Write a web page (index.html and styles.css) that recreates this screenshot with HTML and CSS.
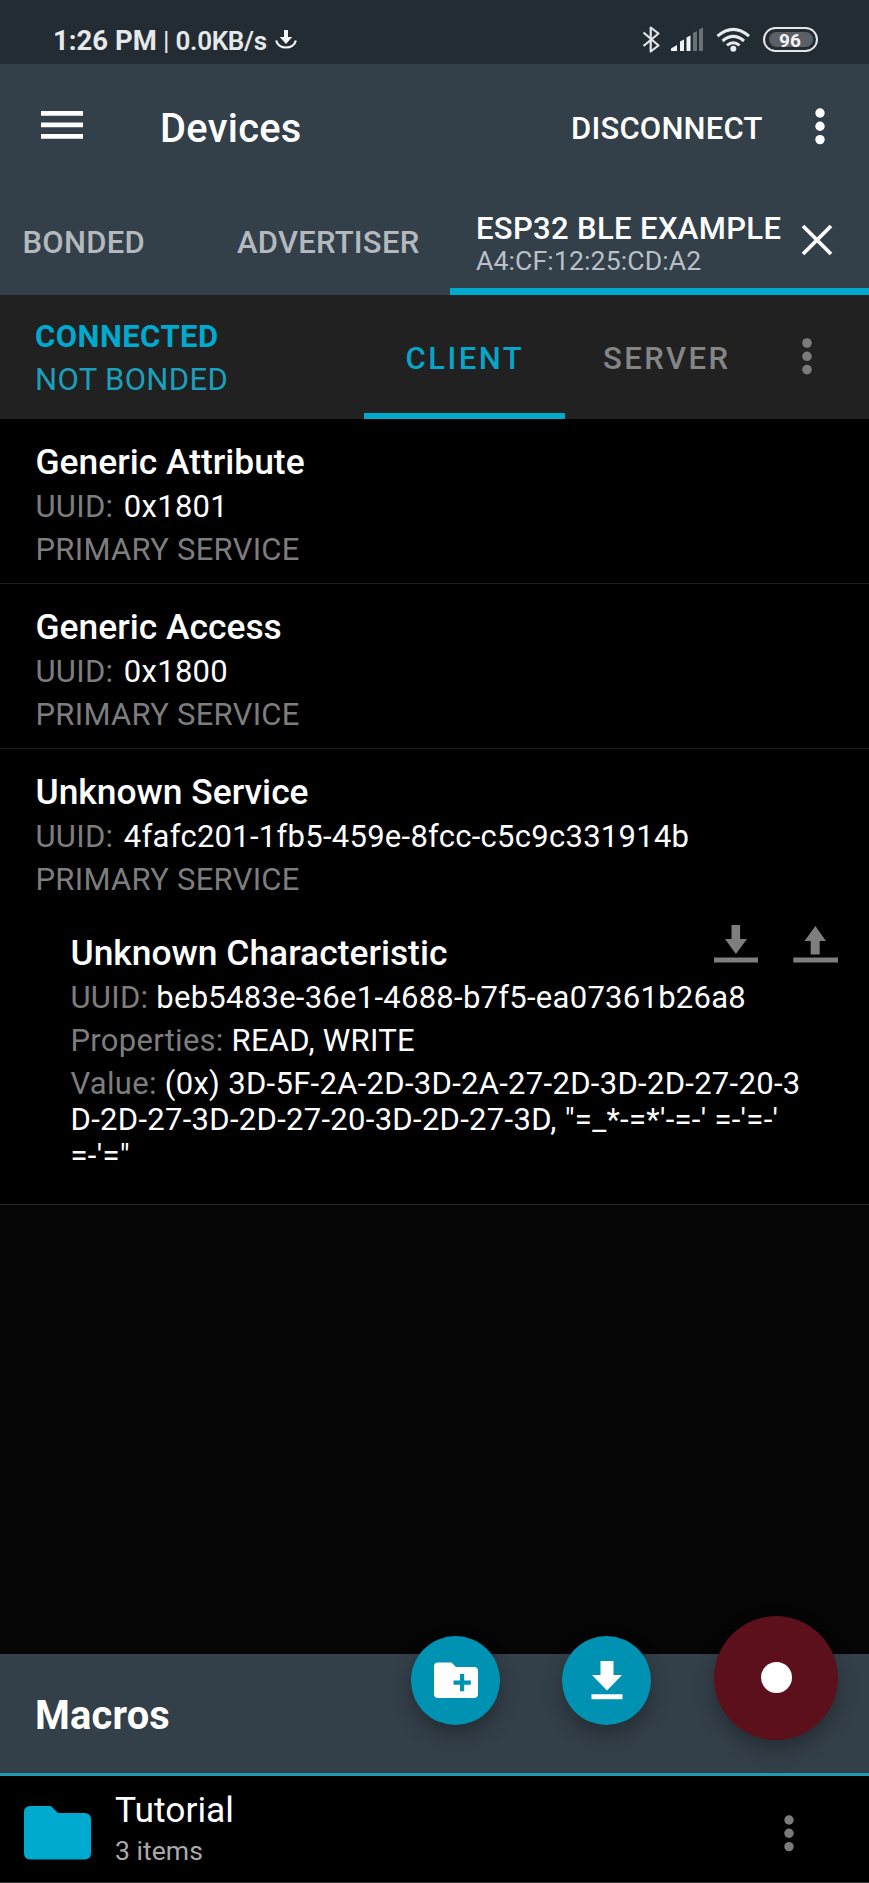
FILE: index.html
```html
<!DOCTYPE html>
<html lang="en">
<head>
<meta charset="utf-8">
<title>Devices</title>
<link rel="stylesheet" href="styles.css">
</head>
<body>
<div class="screen">
  <div class="status">
    <span class="time">1:26 PM</span><span class="sep">|</span><span class="rate">0.0KB/s</span>
    <svg class="status-dl" width="22" height="20" viewBox="0 0 22 20"><path d="M9 0h4v7h4.200L11 14 4.800 7H9z" fill="#f4f6f7"/><path d="M1.200 10.500C3 19.800 19 19.800 20.800 10.500" fill="none" stroke="#f4f6f7" stroke-width="2.200"/></svg>
    <svg class="status-icons" width="176" height="30" viewBox="642 24 176 30">
      <path d="M643.500 32.500 658.500 45.500 650.700 51.500V27.500L658.500 33.500 643.500 46" fill="none" stroke="#e4e7e9" stroke-width="2.200" stroke-linejoin="round"/>
      <path d="M671 51V48.500L677 45V51z" fill="#f1f3f4"/><path d="M680 51V41.500L684 39.500V51zM686.500 51V37.500L690.500 35.500V51z" fill="#f1f3f4"/>
      <path d="M693 51V33L697 31V51zM699 51V29.500L703 27.500V51z" fill="#6a7176"/>
      <g fill="none" stroke="#e8ebed" stroke-width="3"><path d="M717.500 36.200Q733.300 22.500 749 36.200M722.500 41Q733.300 31.800 744 41M727 45.400Q733.300 40 739.500 45.400"/></g><circle cx="733.300" cy="48.800" r="3" fill="#e8ebed"/>
      <rect x="764" y="28" width="53" height="23" rx="11.500" fill="none" stroke="#e4e7e9" stroke-width="2"/><rect x="769" y="32" width="44" height="15" rx="7.500" fill="#5a6065"/>
      <text class="battery" x="790" y="46.500" text-anchor="middle">96</text>
    </svg>
  </div>

  <header class="toolbar">
    <svg class="menu" width="42" height="28" viewBox="0 0 42 28"><path d="M0 0h42v4.700H0zM0 11.500h42v4.700H0zM0 23h42v4.700H0z" fill="#fff"/></svg>
    <h1 class="title">Devices</h1>
    <span class="disconnect">DISCONNECT</span>
    <svg class="dots-top" width="10" height="37" viewBox="0 0 10 37" fill="#fff"><circle cx="5" cy="5" r="4.700"/><circle cx="5" cy="18.300" r="4.700"/><circle cx="5" cy="31.600" r="4.700"/></svg>
  </header>

  <nav class="tabs">
    <div class="tab tab-bonded">BONDED</div>
    <div class="tab tab-adv">ADVERTISER</div>
    <div class="tab-active">
      <div class="device"><div class="device-name">ESP32 BLE EXAMPLE</div><div class="device-mac">A4:CF:12:25:CD:A2</div></div>
      <svg class="close" width="32" height="32" viewBox="0 0 32 32"><path d="M2 2l28 28M30 2L2 30" stroke="#fff" stroke-width="3.800" fill="none"/></svg>
    </div>
  </nav>

  <div class="connection">
    <div class="state"><div class="connected">CONNECTED</div><div class="bond">NOT BONDED</div></div>
    <div class="mode mode-active">CLIENT</div>
    <div class="mode mode-server">SERVER</div>
    <svg class="dots-mid" width="10" height="37" viewBox="0 0 10 37" fill="#7b7b7b"><circle cx="5" cy="5" r="4.800"/><circle cx="5" cy="18.300" r="4.800"/><circle cx="5" cy="31.600" r="4.800"/></svg>
  </div>

  <main class="services">
    <section class="service">
      <h2 class="name">Generic Attribute</h2>
      <div class="line"><span class="label wide">UUID:</span>0x1801</div>
      <div class="line label">PRIMARY SERVICE</div>
    </section>
    <section class="service">
      <h2 class="name">Generic Access</h2>
      <div class="line"><span class="label wide">UUID:</span>0x1800</div>
      <div class="line label">PRIMARY SERVICE</div>
    </section>
    <section class="service service-open">
      <h2 class="name">Unknown Service</h2>
      <div class="line"><span class="label wide">UUID:</span>4fafc201-1fb5-459e-8fcc-c5c9c331914b</div>
      <div class="line label">PRIMARY SERVICE</div>
      <div class="characteristic">
        <div class="char-head">
          <h3 class="name">Unknown Characteristic</h3>
          <svg class="rw" width="124" height="38" viewBox="0 0 124 38" fill="#7e7e7e"><path d="M17.500 0h8.600v14H33L21.900 29 11 14h6.500zM0 32.500h44v5H0z"/><path d="M101.400 1 112 16h-6.300v13.500h-9V16h-6.200zM79.300 32.500h45v5h-45z"/></svg>
        </div>
        <div class="line"><span class="label">UUID: </span>beb5483e-36e1-4688-b7f5-ea07361b26a8</div>
        <div class="line"><span class="label">Properties: </span>READ, WRITE</div>
        <div class="value"><span class="label">Value: </span>(0x) 3D-5F-2A-2D-3D-2A-27-2D-3D-2D-27-20-3<br>D-2D-27-3D-2D-27-20-3D-2D-27-3D, "=_*-=*'-=-' =-'=-'<br>=-'="</div>
      </div>
    </section>
  </main>

  <footer class="macros">
    <div class="macro-bar">
      <h2 class="macro-title">Macros</h2>
      <div class="fab fab-folder"><svg width="46" height="37" viewBox="0 0 46 37"><path d="M5 .500h13.500L23 5h18q4 0 4 4v23q0 4-4 4H5q-4 0-4-4V4.500q0-4 4-4z" fill="#fff"/><path d="M27 12h4.200v6.500h6.600v4.300h-6.600v6.500H27v-6.500h-6.500v-4.300H27z" fill="#0092b3"/></svg></div>
      <div class="fab fab-down"><svg width="32" height="39" viewBox="0 0 32 39" fill="#fff"><path d="M9.500 0h13v14H31L16 29.500 1 14h8.500zM.500 33.300h31v5h-31z"/></svg></div>
      <div class="fab fab-record"><span class="record-dot"></span></div>
    </div>
    <div class="macro-item">
      <svg class="folder" width="67" height="54" viewBox="0 0 67 54"><path d="M6.500 0H27l7 7h26.500Q67 7 67 13.500V47q0 6.500-6.500 6.500h-54Q0 53.500 0 47V6.500Q0 0 6.500 0z" fill="#00a9ce"/></svg>
      <div class="item-text"><div class="item-name">Tutorial</div><div class="item-count">3 items</div></div>
      <svg class="dots-item" width="10" height="37" viewBox="0 0 10 37" fill="#7b7b7b"><circle cx="5" cy="5" r="4.700"/><circle cx="5" cy="18.300" r="4.700"/><circle cx="5" cy="31.600" r="4.700"/></svg>
    </div>
  </footer>
</div>
</body>
</html>
```
FILE: styles.css
```css
* { box-sizing: border-box; }
html, body { margin: 0; background: #050505; }
h1, h2, h3 { margin: 0; }
svg { display: block; flex: none; }
.screen { width: 869px; height: 1883px; display: flex; flex-direction: column; overflow: hidden; background: #050505; color: #fff; font-family: Roboto, sans-serif; white-space: nowrap; }

.status { height: 64px; flex: none; display: flex; align-items: flex-start; background: #242c33; color: #e6e9eb; font-size: 26.6px; line-height: 40px; font-weight: 700; padding: 21px 0 0 53px; }
.time { width: 110px; font-size: 27.500px; }
.sep { width: 12.500px; font-weight: 400; }
.rate { width: 99.500px; font-weight: 600; font-size: 26px; letter-spacing: -.3px; }
.status-dl { margin-top: 9px; }
.status-icons { margin-left: 345px; margin-top: 3px; }
.battery { font: 700 19px Roboto, sans-serif; fill: #f1f3f4; }

.toolbar { height: 121px; flex: none; display: flex; background: #333f49; padding-left: 41px; }
.menu { margin-top: 47px; }
.title { margin: 39px 0 0 77px; width: 411px; font-size: 39.8px; font-weight: 500; line-height: 52px; letter-spacing: .3px; }
.disconnect { width: 244px; margin-top: 42.500px; font-size: 31px; font-weight: 500; line-height: 44px; letter-spacing: .2px; }
.dots-top { margin-top: 44px; }

.tabs { height: 110px; flex: none; display: flex; background: #333f49; padding-left: 22.500px; color: #b4b9bd; font-size: 31px; font-weight: 500; letter-spacing: .25px; }
.tab { line-height: 40px; padding-top: 38px; }
.tab-bonded { width: 214.500px; }
.tab-adv { width: 213px; }
.tab-active { width: 419px; display: flex; border-bottom: 7px solid #00a9ce; padding-left: 26px; }
.device { width: 325px; padding-top: 24px; }
.device-name { color: #fff; line-height: 40px; letter-spacing: .35px; }
.device-mac { color: #b9c0c6; font-size: 26.6px; font-weight: 400; line-height: 30px; margin-top: -3px; letter-spacing: .12px; }
.close { margin-top: 39px; }

.connection { height: 123.500px; flex: none; display: flex; background: #212121; padding-left: 35px; font-size: 31px; }
.state { width: 328.500px; padding-top: 21px; line-height: 42.500px; color: #1c9fba; letter-spacing: .35px; }
.connected { font-weight: 700; color: #00a9ce; letter-spacing: .45px; }
.mode { height: 123.500px; font-weight: 500; letter-spacing: 2.500px; line-height: 40px; padding-top: 43.500px; }
.mode-active { width: 201.500px; padding-left: 42px; color: #08a5c8; border-bottom: 6.500px solid #00a9ce; }
.mode-server { width: 237px; padding-left: 38px; color: #858585; }
.dots-mid { margin-top: 43px; }

.services { background: #000; flex: none; }
.service { height: 165px; padding: 23.500px 0 0 35.500px; border-bottom: 1px solid #1e1e1e; }
.service-open { height: 456px; border-bottom-color: #2b2b2b; }
.name { font-size: 35.400px; font-weight: 500; line-height: 40px; margin-bottom: 4px; }
.line { font-size: 31px; line-height: 42.600px; color: #fff; letter-spacing: .27px; }
.line.label, .label { color: #7d7d7d; }
.wide { margin-right: 10.500px; }
.characteristic { padding: 32px 0 0 35px; }
.char-head { display: flex; height: 44px; }
.char-head .name { width: 643px; }
.rw { margin-top: -8px; }
.value { font-size: 31px; line-height: 36.400px; padding-top: 3.300px; letter-spacing: .3px; }

.macros { margin-top: auto; flex: none; }
.macro-bar { height: 122px; display: flex; background: #333f49; border-bottom: 3px solid #1e9bb5; padding-left: 35px; }
.macro-title { width: 376px; font-size: 39.800px; font-weight: 700; line-height: 52px; padding-top: 36px; letter-spacing: .2px; }
.fab { flex: none; display: flex; align-items: center; justify-content: center; width: 89px; height: 89px; border-radius: 50%; background: #0092b3; box-shadow: 0 10px 20px rgba(0,0,0,.28); margin-top: -18px; }
.fab-down { margin-left: 62px; }
.fab-record { width: 124px; height: 124px; margin: -38.500px 0 0 63px; background: #5b101c; }
.record-dot { width: 31px; height: 31px; border-radius: 50%; background: #fff; }
.macro-item { height: 107px; display: flex; background: #000; border-bottom: 1px solid #363636; padding-left: 24px; }
.folder { margin-top: 30px; }
.item-text { width: 692px; padding: 13.500px 0 0 24px; }
.item-name { font-size: 35.400px; line-height: 40px; }
.item-count { font-size: 26.600px; line-height: 34px; margin-top: 4px; color: #a9a9a9; }
.dots-item { margin: 39px 0 0 1px; }
```
